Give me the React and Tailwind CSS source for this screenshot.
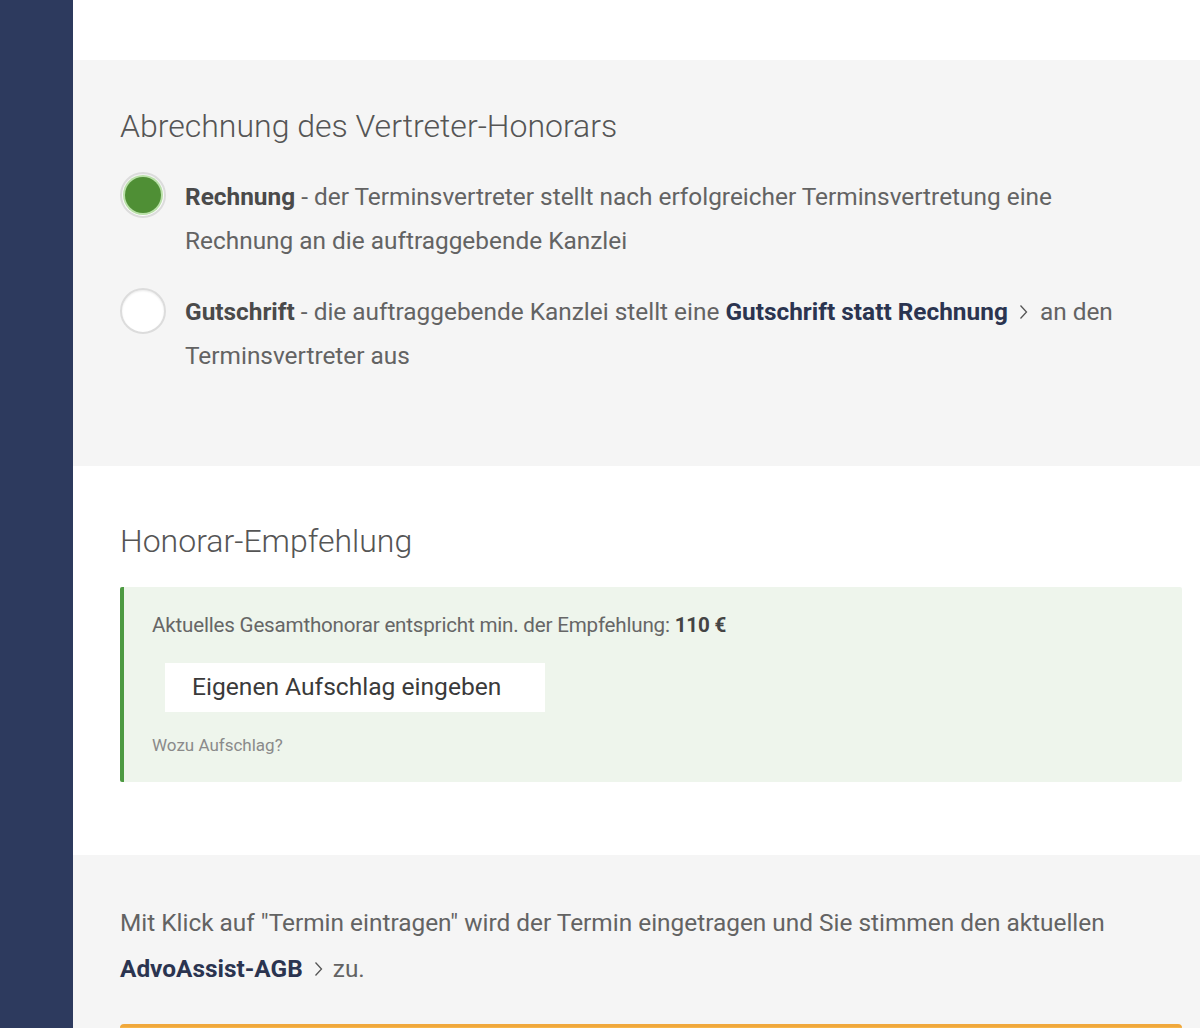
import React, { useState } from "react";

const font = { fontFamily: "Roboto, 'Noto Sans', Arial, sans-serif" };

function Chevron({ className }) {
  return (
    <svg viewBox="0 0 10 16" className={className} fill="none" stroke="currentColor" strokeWidth="1.3">
      <path d="M2.5 1.5l6 6.5-6 6.5" />
    </svg>
  );
}

function Radio({ checked }) {
  return (
    <span className="shrink-0 w-[46px] h-[46px] rounded-full bg-white border-2 border-[#dcdcdc] flex items-center justify-center shadow-[inset_0_1px_2px_rgba(0,0,0,0.08)]">
      {checked && (
        <span className="w-[36px] h-[36px] rounded-full bg-[#4f8f35] ring-2 ring-[#b9e0a8]" />
      )}
    </span>
  );
}

export default function App() {
  const [billing, setBilling] = useState("rechnung");

  return (
    <div className="flex min-h-screen bg-white text-[#636363]" style={font}>
      {/* SIDEBAR */}
      <div className="w-[73px] shrink-0 bg-[#2d3a5e]" />

      {/* MAIN */}
      <div className="flex-1 flex flex-col overflow-hidden">
        <div className="h-[60px] bg-white" />

        {/* Abrechnung */}
        <section className="bg-[#f5f5f5] pl-[47px] pr-[18px] pt-[46px] h-[406px]">
          <h2 className="text-[32px] leading-[40px] text-[#555] font-light">
            Abrechnung des Vertreter-Honorars
          </h2>

          <div className="mt-[30px] flex flex-col gap-[28px]">
            <label className="flex gap-[19px] cursor-pointer" onClick={() => setBilling("rechnung")}>
              <span className="-mt-[4px]"><Radio checked={billing === "rechnung"} /></span>
              <p className="text-[24.4px] leading-[44px] -mt-[1px] whitespace-nowrap">
                <b className="font-bold text-[#4a4a4a]">Rechnung</b> - der Terminsvertreter stellt nach erfolgreicher Terminsvertretung eine
                <br />
                Rechnung an die auftraggebende Kanzlei
              </p>
            </label>

            <label className="flex gap-[19px] cursor-pointer" onClick={() => setBilling("gutschrift")}>
              <span className="-mt-[3px]"><Radio checked={billing === "gutschrift"} /></span>
              <p className="text-[24.4px] leading-[44px] -mt-[1px] whitespace-nowrap">
                <b className="font-bold text-[#4a4a4a]">Gutschrift</b> - die auftraggebende Kanzlei stellt eine{" "}
                <a className="font-bold text-[#2b3450] inline-flex items-center gap-[10px] mr-[6px]">
                  Gutschrift statt Rechnung
                  <Chevron className="w-[10px] h-[20px] text-[#555]" />
                </a>{" "}
                an den
                <br />
                Terminsvertreter aus
              </p>
            </label>
          </div>
        </section>

        {/* Honorar-Empfehlung */}
        <section className="bg-white pl-[47px] pr-[18px] pt-[55px] h-[389px]">
          <h2 className="text-[32px] leading-[40px] text-[#555] font-light">Honorar-Empfehlung</h2>

          <div className="mt-[26px] bg-[#eef5ec] border-l-4 border-[#4d9a42] rounded-[2px] pl-[28px] pt-[25px] pb-[27px]">
            <p className="text-[20.6px] leading-[26px] text-[#666] tracking-[-0.2px]">
              Aktuelles Gesamthonorar entspricht min. der Empfehlung: <b className="font-bold text-[#444]">110 €</b>
            </p>
            <button className="mt-[25px] ml-[13px] bg-white h-[49px] w-[380px] text-left pl-[27px] text-[24.6px] text-[#3a3a3a]">
              Eigenen Aufschlag eingeben
            </button>
            <p className="mt-[23px] text-[17px] leading-[20px] text-[#8a8a8a]">Wozu Aufschlag?</p>
          </div>
        </section>

        {/* AGB */}
        <section className="flex-1 bg-[#f5f5f5] pl-[47px] pr-[18px] pt-[45px]">
          <p className="text-[24.4px] leading-[46px] whitespace-nowrap">
            Mit Klick auf "Termin eintragen" wird der Termin eingetragen und Sie stimmen den aktuellen
            <br />
            <a className="font-bold text-[#2b3450] inline-flex items-center gap-[10px] mr-[4px]">
              AdvoAssist-AGB
              <Chevron className="w-[10px] h-[20px] text-[#555]" />
            </a>{" "}
            zu.
          </p>
          <div className="mt-[32px] h-[40px] rounded-t-[4px] border-t-[3px] border-[#f0a83c] bg-[#f7b54a]" />
        </section>
      </div>
    </div>
  );
}
